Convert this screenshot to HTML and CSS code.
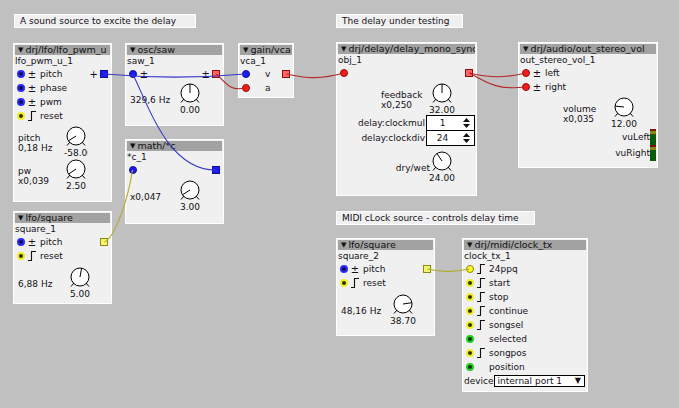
FILE: index.html
```html
<!DOCTYPE html>
<html>
<head>
<meta charset="utf-8">
<title>Axoloti patch</title>
<link rel="stylesheet" href="styles.css">
</head>
<body>
<div class="canvas">
  <div class="comment c1">A sound source to excite the delay</div>
  <div class="comment c2">The delay under testing</div>
  <div class="comment c3">MIDI cLock source - controls delay time</div>

  <!-- drj/lfo/lfo_pwm_u -->
  <div class="obj m-pwm">
    <div class="title"><span class="tri">▼</span>drj/lfo/lfo_pwm_u</div>
    <div class="inst">lfo_pwm_u_1</div>
    <div class="io">
      <div class="ins">
        <div class="jrow"><i class="jack ring blue"></i><span class="sym">±</span><span>pitch</span></div>
        <div class="jrow"><i class="jack ring blue"></i><span class="sym">±</span><span>phase</span></div>
        <div class="jrow"><i class="jack ring blue"></i><span class="sym">±</span><span>pwm</span></div>
        <div class="jrow"><i class="jack ring yellow"></i><span class="sym"><svg class="step" width="8" height="10" viewBox="0 0 8 10"><polyline points="0,9.5 3.5,9.5 3.5,0.5 8,0.5"/></svg></span><span>reset</span></div>
      </div>
      <div class="outs">
        <div class="jrow"><span class="osym">+</span><i class="sq blue"></i></div>
      </div>
    </div>
    <div class="params p-left mt3">
      <div class="param">
        <div class="plab w46">pitch<br>0,18 Hz</div>
        <div class="knob"><svg width="24" height="22" viewBox="0 0 24 22"><circle cx="12" cy="10" r="9"/><path d="M6 16L3 19.5M18 16L21 19.5M12 10L4.4 14.8"/></svg><div class="kval clip">-58.00</div></div>
      </div>
      <div class="param">
        <div class="plab w46">pw<br>x0,039</div>
        <div class="knob"><svg width="24" height="22" viewBox="0 0 24 22"><circle cx="12" cy="10" r="9"/><path d="M6 16L3 19.5M18 16L21 19.5M12 10L4.6 15.1"/></svg><div class="kval">2.50</div></div>
      </div>
    </div>
  </div>

  <!-- osc/saw -->
  <div class="obj m-saw">
    <div class="title"><span class="tri">▼</span>osc/saw</div>
    <div class="inst">saw_1</div>
    <div class="io">
      <div class="ins">
        <div class="jrow"><i class="jack fill blue"></i><span class="sym">±</span></div>
      </div>
      <div class="outs">
        <div class="jrow"><span class="osym">±</span><i class="sq red dots"></i></div>
      </div>
    </div>
    <div class="params p-left mt2">
      <div class="param">
        <div class="plab w48">329,6 Hz</div>
        <div class="knob"><svg width="24" height="22" viewBox="0 0 24 22"><circle cx="12" cy="10" r="9"/><path d="M6 16L3 19.5M18 16L21 19.5M12 10L12 1"/></svg><div class="kval">0.00</div></div>
      </div>
    </div>
  </div>

  <!-- math/*c -->
  <div class="obj m-mul">
    <div class="title"><span class="tri">▼</span>math/*c</div>
    <div class="inst">*c_1</div>
    <div class="io">
      <div class="ins">
        <div class="jrow"><i class="jack fill blue"></i></div>
      </div>
      <div class="outs">
        <div class="jrow"><i class="sq blue"></i></div>
      </div>
    </div>
    <div class="params p-left mt3">
      <div class="param">
        <div class="plab w48">x0,047</div>
        <div class="knob"><svg width="24" height="22" viewBox="0 0 24 22"><circle cx="12" cy="10" r="9"/><path d="M6 16L3 19.5M18 16L21 19.5M12 10L4.4 14.8"/></svg><div class="kval">3.00</div></div>
      </div>
    </div>
  </div>

  <!-- gain/vca -->
  <div class="obj m-vca">
    <div class="title"><span class="tri">▼</span>gain/vca</div>
    <div class="inst">vca_1</div>
    <div class="io">
      <div class="ins">
        <div class="jrow"><i class="jack fill blue"></i><span class="sym"></span><span>v</span></div>
        <div class="jrow"><i class="jack fill red"></i><span class="sym"></span><span>a</span></div>
      </div>
      <div class="outs">
        <div class="jrow"><i class="sq red dots"></i></div>
      </div>
    </div>
  </div>

  <!-- drj/delay/delay_mono_sync -->
  <div class="obj m-delay">
    <div class="title"><span class="tri">▼</span>drj/delay/delay_mono_sync</div>
    <div class="inst">obj_1</div>
    <div class="io">
      <div class="ins">
        <div class="jrow"><i class="jack fill red"></i></div>
      </div>
      <div class="outs">
        <div class="jrow"><i class="sq red dots"></i></div>
      </div>
    </div>
    <div class="params p-right mt3">
      <div class="param">
        <div class="plab w49">feedback<br>x0,250</div>
        <div class="knob"><svg width="24" height="22" viewBox="0 0 24 22"><circle cx="12" cy="10" r="9"/><path d="M6 16L3 19.5M18 16L21 19.5M12 10L12 1"/></svg><div class="kval">32.00</div></div>
      </div>
    </div>
    <div class="spinrow">
      <span class="slab">delay:clockmul</span>
      <div class="spin"><span class="sv">1</span><svg class="arrows" width="7" height="10" viewBox="0 0 7 10"><path d="M3.5 0L7 4H0Z M3.5 10L7 6H0Z"/></svg></div>
    </div>
    <div class="spinrow">
      <span class="slab">delay:clockdiv</span>
      <div class="spin"><span class="sv">24</span><svg class="arrows" width="7" height="10" viewBox="0 0 7 10"><path d="M3.5 0L7 4H0Z M3.5 10L7 6H0Z"/></svg></div>
    </div>
    <div class="params p-right mt5">
      <div class="param">
        <div class="plab">dry/wet</div>
        <div class="knob"><svg width="24" height="22" viewBox="0 0 24 22"><circle cx="12" cy="10" r="9"/><path d="M6 16L3 19.5M18 16L21 19.5M12 10L7 2.5"/></svg><div class="kval">24.00</div></div>
      </div>
    </div>
  </div>

  <!-- drj/audio/out_stereo_vol -->
  <div class="obj m-out">
    <div class="title"><span class="tri">▼</span>drj/audio/out_stereo_vol</div>
    <div class="inst">out_stereo_vol_1</div>
    <div class="io">
      <div class="ins">
        <div class="jrow"><i class="jack fill red"></i><span class="sym">±</span><span>left</span></div>
        <div class="jrow"><i class="jack fill red"></i><span class="sym">±</span><span>right</span></div>
      </div>
    </div>
    <div class="params p-right2 mt3">
      <div class="param">
        <div class="plab w49">volume<br>x0,035</div>
        <div class="knob"><svg width="24" height="22" viewBox="0 0 24 22"><circle cx="12" cy="10" r="9"/><path d="M6 16L3 19.5M18 16L21 19.5M12 10L3 9.1"/></svg><div class="kval">12.00</div></div>
      </div>
    </div>
    <div class="vurow first"><span>vuLeft</span><div class="vu"><i class="vr"></i><i class="vy"></i><i class="vg"></i></div></div>
    <div class="vurow"><span>vuRight</span><div class="vu"><i class="vr"></i><i class="vy"></i><i class="vg"></i></div></div>
  </div>

  <!-- lfo/square (square_1) -->
  <div class="obj m-sq1">
    <div class="title"><span class="tri">▼</span>lfo/square</div>
    <div class="inst">square_1</div>
    <div class="io">
      <div class="ins">
        <div class="jrow"><i class="jack ring blue"></i><span class="sym">±</span><span>pitch</span></div>
        <div class="jrow"><i class="jack ring yellow"></i><span class="sym"><svg class="step" width="8" height="10" viewBox="0 0 8 10"><polyline points="0,9.5 3.5,9.5 3.5,0.5 8,0.5"/></svg></span><span>reset</span></div>
      </div>
      <div class="outs">
        <div class="jrow"><i class="sq yellow dots"></i></div>
      </div>
    </div>
    <div class="params p-left mt4">
      <div class="param">
        <div class="plab w50">6,88 Hz</div>
        <div class="knob"><svg width="24" height="22" viewBox="0 0 24 22"><circle cx="12" cy="10" r="9"/><path d="M6 16L3 19.5M18 16L21 19.5M12 10L13.6 1.1"/></svg><div class="kval">5.00</div></div>
      </div>
    </div>
  </div>

  <!-- lfo/square (square_2) -->
  <div class="obj m-sq2">
    <div class="title"><span class="tri">▼</span>lfo/square</div>
    <div class="inst">square_2</div>
    <div class="io">
      <div class="ins">
        <div class="jrow"><i class="jack ring blue"></i><span class="sym">±</span><span>pitch</span></div>
        <div class="jrow"><i class="jack ring yellow"></i><span class="sym"><svg class="step" width="8" height="10" viewBox="0 0 8 10"><polyline points="0,9.5 3.5,9.5 3.5,0.5 8,0.5"/></svg></span><span>reset</span></div>
      </div>
      <div class="outs">
        <div class="jrow"><i class="sq yellow dots"></i></div>
      </div>
    </div>
    <div class="params p-left mt4">
      <div class="param">
        <div class="plab w50">48,16 Hz</div>
        <div class="knob"><svg width="24" height="22" viewBox="0 0 24 22"><circle cx="12" cy="10" r="9"/><path d="M6 16L3 19.5M18 16L21 19.5M12 10L20.9 8.7"/></svg><div class="kval">38.70</div></div>
      </div>
    </div>
  </div>

  <!-- drj/midi/clock_tx -->
  <div class="obj m-clk">
    <div class="title"><span class="tri">▼</span>drj/midi/clock_tx</div>
    <div class="inst">clock_tx_1</div>
    <div class="ins">
      <div class="jrow"><i class="jack fill yellow"></i><span class="sym"><svg class="step" width="8" height="10" viewBox="0 0 8 10"><polyline points="0,9.5 3.5,9.5 3.5,0.5 8,0.5"/></svg></span><span>24ppq</span></div>
      <div class="jrow"><i class="jack ring yellow"></i><span class="sym"><svg class="step" width="8" height="10" viewBox="0 0 8 10"><polyline points="0,9.5 3.5,9.5 3.5,0.5 8,0.5"/></svg></span><span>start</span></div>
      <div class="jrow"><i class="jack ring yellow"></i><span class="sym"><svg class="step" width="8" height="10" viewBox="0 0 8 10"><polyline points="0,9.5 3.5,9.5 3.5,0.5 8,0.5"/></svg></span><span>stop</span></div>
      <div class="jrow"><i class="jack ring yellow"></i><span class="sym"><svg class="step" width="8" height="10" viewBox="0 0 8 10"><polyline points="0,9.5 3.5,9.5 3.5,0.5 8,0.5"/></svg></span><span>continue</span></div>
      <div class="jrow"><i class="jack ring yellow"></i><span class="sym"><svg class="step" width="8" height="10" viewBox="0 0 8 10"><polyline points="0,9.5 3.5,9.5 3.5,0.5 8,0.5"/></svg></span><span>songsel</span></div>
      <div class="jrow"><i class="jack ring green"></i><span class="sym"></span><span>selected</span></div>
      <div class="jrow"><i class="jack ring yellow"></i><span class="sym"><svg class="step" width="8" height="10" viewBox="0 0 8 10"><polyline points="0,9.5 3.5,9.5 3.5,0.5 8,0.5"/></svg></span><span>songpos</span></div>
      <div class="jrow"><i class="jack ring green"></i><span class="sym"></span><span>position</span></div>
    </div>
    <div class="devrow"><span>device</span><div class="dd"><span>internal port 1</span><span class="ddtri">▼</span></div></div>
  </div>

  <svg class="wires" width="679" height="408" viewBox="0 0 679 408">
    <g fill="none" stroke-width="1.1">
      <path class="w-blue" d="M104.5 74C150 78 200 78 245.5 74"/>
      <path class="w-blue" d="M216.5 170C165 171 145 95 132.5 74"/>
      <path class="w-red" d="M216.5 74C228 86 232 91 245.5 88"/>
      <path class="w-red" d="M286.5 74C308 79 322 79 343.5 73"/>
      <path class="w-red" d="M469.5 73C490 78 505 78 525.5 73"/>
      <path class="w-red" d="M469.5 73C490 85 500 90 525.5 87"/>
      <path class="w-yel" d="M104.5 242C115 237 128 200 132.5 170"/>
      <path class="w-yel" d="M427.5 269C440 272 455 272 469.5 269"/>
    </g>
  </svg>
</div>
</body>
</html>
```

FILE: styles.css
```css
* { box-sizing: border-box; }
html, body { margin: 0; padding: 0; }
body {
  background: #c0c0c0;
  font-family: "DejaVu Sans", "Open Sans", sans-serif;
  font-size: 9px;
  color: #141018;
}
.canvas {
  position: relative;
  width: 679px;
  height: 408px;
  overflow: hidden;
}

/* comments */
.comment {
  position: absolute;
  background: #f0f0f0;
  border: 1px solid #fff;
  height: 14px;
  line-height: 12px;
  padding-left: 5px;
  white-space: nowrap;
}
.c1 { left: 14px; top: 14px; width: 182px; }
.c2 { left: 336px; top: 14px; width: 127px; }
.c3 { left: 336px; top: 211px; width: 199px; }

/* objects (windows on the patch canvas) */
.obj {
  position: absolute;
  background: #f0f0f0;
  border: 1px solid #fff;
  padding: 1px;
  overflow: hidden;
}
.m-pwm   { left: 13px;  top: 43px;  width: 99px;  height: 159px; }
.m-saw   { left: 125px; top: 43px;  width: 99px;  height: 83px; }
.m-mul   { left: 125px; top: 139px; width: 99px;  height: 85px; }
.m-vca   { left: 238px; top: 43px;  width: 56px;  height: 55px; }
.m-delay { left: 336px; top: 42px;  width: 141px; height: 154px; }
.m-out   { left: 518px; top: 42px;  width: 140px; height: 126px; }
.m-sq1   { left: 13px;  top: 211px; width: 99px;  height: 93px; }
.m-sq2   { left: 336px; top: 238px; width: 99px;  height: 98px; }
.m-clk   { left: 462px; top: 238px; width: 126px; height: 154px; }

.title {
  height: 10px;
  line-height: 10px;
  background: #a2a2a2;
  font-size: 9.5px;
  padding-left: 3px;
  white-space: nowrap;
  overflow: hidden;
  color: #111;
}
.tri {
  font-size: 7px;
  margin-right: 2px;
  vertical-align: 1px;
}
.inst {
  height: 12px;
  line-height: 12px;
  white-space: nowrap;
}

/* inlets / outlets */
.io { display: flex; justify-content: space-between; }
.jrow {
  height: 14px;
  display: flex;
  align-items: center;
  white-space: nowrap;
}
.jack {
  display: block;
  flex: none;
  width: 8px;
  height: 8px;
  border-radius: 50%;
  margin-left: 2px;
  margin-right: -1px;
}
.jack.fill.blue   { background: #1a1aff; border: 1px solid #10108a; }
.jack.fill.red    { background: #ff1a1a; border: 1px solid #8a1010; }
.jack.fill.yellow { background: #ffff20; border: 1px solid #8a8a10; }
.jack.ring.blue   { background: #101050; border: 2px solid #2a2aff; }
.jack.ring.yellow { background: #303010; border: 2px solid #f0f020; }
.jack.ring.green  { background: #103010; border: 2px solid #20d020; }

.sym {
  width: 8px;
  margin: 0 4px;
  text-align: center;
  display: flex;
  justify-content: center;
  font-size: 10px;
}
.step polyline { fill: none; stroke: #111; stroke-width: 1.1; }

.osym { margin-right: 2px; font-size: 10px; }
.sq {
  display: block;
  flex: none;
  width: 8px;
  height: 8px;
  margin-right: 2px;
}
.sq.blue   { background: #1a1aff; border: 1px solid #10108a; }
.sq.red    { background: #ff1010; border: 1px solid #8a1010; }
.sq.yellow { background: #f0f020; border: 1px solid #8a8a10; }
.sq.dots { background-image: radial-gradient(circle, rgba(255,255,255,0.55) 0.6px, transparent 0.9px); background-size: 2px 2px; }

/* parameters */
.params { display: flex; flex-direction: column; }
.p-left { padding-left: 3px; }
.p-right { align-items: flex-end; padding-right: 21px; }
.p-right2 { align-items: flex-end; padding-right: 20px; }
.mt2 { margin-top: 2px; }
.mt3 { margin-top: 3px; }
.mt4 { margin-top: 4px; }
.mt5 { margin-top: 5px; }
.param { display: flex; align-items: center; }
.plab { line-height: 10px; white-space: nowrap; }
.w46 { width: 46px; }
.w48 { width: 48px; }
.w49 { width: 49px; }
.w50 { width: 50px; }
.knob {
  width: 24px;
  height: 33px;
  display: flex;
  flex-direction: column;
  align-items: center;
}
.knob svg { display: block; flex: none; }
.knob circle { fill: #fff; stroke: #000; stroke-width: 1; }
.knob path { fill: none; stroke: #000; stroke-width: 1; }
.kval {
  width: 32px;
  flex: none;
  line-height: 11px;
  text-align: center;
  white-space: nowrap;
  color: #111;
}
.kval.clip { width: 24px; overflow: hidden; }

/* spinners */
.spinrow {
  display: flex;
  justify-content: flex-end;
  align-items: center;
  height: 16px;
  margin-top: -1px;
}
.slab { margin-right: 1px; white-space: nowrap; }
.spin {
  width: 49px;
  height: 16px;
  border: 1px solid #000;
  background: #fff;
  display: flex;
  align-items: center;
}
.sv { width: 31px; text-align: center; }
.arrows { display: block; margin-left: 5px; }
.arrows path { fill: #111; }

/* vu meters */
.vurow {
  display: flex;
  justify-content: flex-end;
  align-items: center;
  height: 16px;
}
.vurow.first { margin-top: -1px; }
.vu {
  width: 6px;
  height: 16px;
  display: flex;
  flex-direction: column;
}
.vu i { display: block; }
.vr { height: 2px; background: #7a1010; }
.vy { height: 3px; background: #8a8a10; }
.vg { flex: 1; background: #0a5a0a; }

/* dropdown */
.devrow {
  display: flex;
  align-items: center;
  height: 14px;
}
.dd {
  flex: 1;
  height: 12px;
  margin-right: 1px;
  border: 1px solid #000;
  background: #fff;
  display: flex;
  align-items: center;
  justify-content: space-between;
  padding: 0 3px 0 3px;
  line-height: 10px;
}
.ddtri { font-size: 8px; }

/* wires */
.wires {
  position: absolute;
  left: 0;
  top: 0;
  pointer-events: none;
}
.w-blue { stroke: #3636c8; }
.w-red  { stroke: #b42828; }
.w-yel  { stroke: #b0ac22; }
```
